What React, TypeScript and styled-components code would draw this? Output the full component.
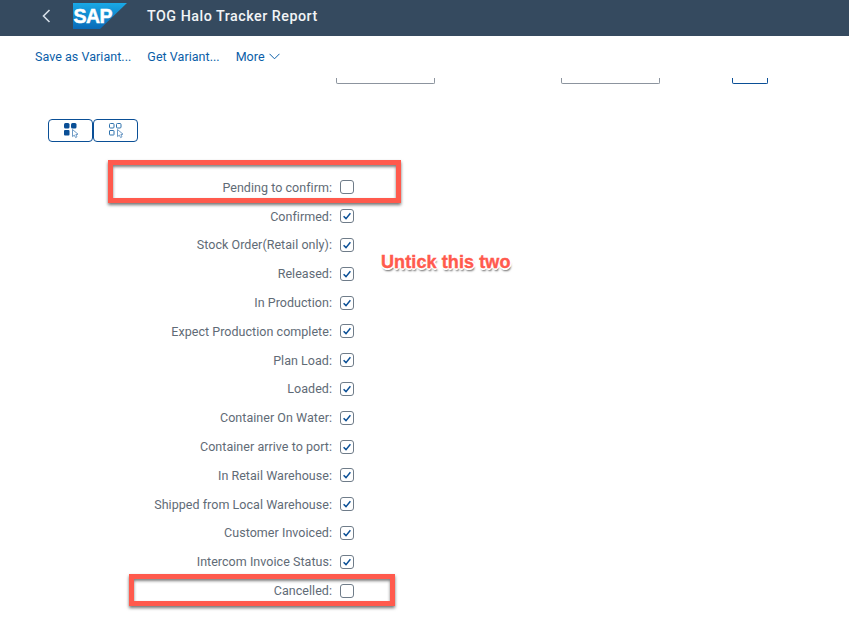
import React from 'react';
import styled, { createGlobalStyle } from 'styled-components';

const colors = {
  shell: '#354a5f',
  link: '#0a5ea8',
  label: '#5f6b76',
  inputLine: '#8c949e',
  boxLine: '#0a4f96',
  red: '#ff5a4d',
};

const statuses = [
  { label: 'Pending to confirm:', checked: false },
  { label: 'Confirmed:', checked: true },
  { label: 'Stock Order(Retail only):', checked: true },
  { label: 'Released:', checked: true },
  { label: 'In Production:', checked: true },
  { label: 'Expect Production complete:', checked: true },
  { label: 'Plan Load:', checked: true },
  { label: 'Loaded:', checked: true },
  { label: 'Container On Water:', checked: true },
  { label: 'Container arrive to port:', checked: true },
  { label: 'In Retail Warehouse:', checked: true },
  { label: 'Shipped from Local Warehouse:', checked: true },
  { label: 'Customer Invoiced:', checked: true },
  { label: 'Intercom Invoice Status:', checked: true },
  { label: 'Cancelled:', checked: false },
];

const GlobalStyle = createGlobalStyle`
  html, body {
    margin: 0;
    background: #fff;
    overflow: hidden;
  }
  body {
    font-family: Roboto, "Liberation Sans", sans-serif;
  }
`;

const Page = styled.div`
  position: relative;
  width: 849px;
  height: 621px;
  overflow: hidden;
`;

const ShellBar = styled.header`
  display: flex;
  align-items: center;
  height: 36px;
  padding-left: 41px;
  background: ${colors.shell};
`;

const BackIcon = styled.svg`
  width: 11px;
  height: 14px;
  margin-right: 21px;
  margin-top: -4px;
`;

const Logo = styled.svg`
  width: 54px;
  height: 26px;
  margin-top: -4px;
  margin-right: 20px;
`;

const Title = styled.h1`
  margin: -4px 0 0;
  font-size: 14.3px;
  font-weight: 500;
  letter-spacing: 0.5px;
  color: #f2f4f6;
  white-space: nowrap;
`;

const ToolBar = styled.nav`
  display: flex;
  align-items: center;
  gap: 16px;
  height: 42px;
  padding-left: 35px;
`;

const ToolLink = styled.a`
  display: inline-flex;
  align-items: center;
  gap: 4px;
  margin-top: -2px;
  font-size: 12.5px;
  letter-spacing: 0.04px;
  color: ${colors.link};
`;

const ClippedFields = styled.div`
  display: flex;
  height: 6px;
  padding-left: 336px;
`;

const ClippedField = styled.div<{ $width: number; $gap: number; $color: string }>`
  box-sizing: border-box;
  width: ${(p) => p.$width}px;
  margin-right: ${(p) => p.$gap}px;
  border: 1px solid ${(p) => p.$color};
  border-top: none;
  border-radius: 0 0 2px 2px;
`;

const ViewButtons = styled.div`
  display: flex;
  margin: 35px 0 0 48px;
`;

const ViewButton = styled.button`
  display: flex;
  align-items: center;
  justify-content: center;
  width: 45px;
  height: 23px;
  padding: 0;
  background: #fff;
  border: 1px solid ${colors.boxLine};
  border-radius: 4px;
`;

const Form = styled.div`
  margin-top: 31px;
`;

const Row = styled.label`
  display: grid;
  grid-template-columns: 332px 14px;
  column-gap: 8px;
  align-items: center;
  height: 28.8px;
`;

const Label = styled.span`
  font-size: 12.5px;
  letter-spacing: 0.04px;
  color: ${colors.label};
  text-align: right;
  white-space: nowrap;
`;

const CheckBox = styled.span`
  display: flex;
  align-items: center;
  justify-content: center;
  box-sizing: border-box;
  width: 14px;
  height: 14px;
  border: 1px solid #6f7c89;
  border-radius: 3px;
  background: #fff;
`;

const Highlight = styled.div<{ $left: number; $top: number; $width: number; $height: number }>`
  position: absolute;
  box-sizing: border-box;
  left: ${(p) => p.$left}px;
  top: ${(p) => p.$top}px;
  width: ${(p) => p.$width}px;
  height: ${(p) => p.$height}px;
  border: 5px solid ${colors.red};
  box-shadow: 0 2px 3px rgba(0, 0, 0, 0.55), inset 0 2px 3px rgba(0, 0, 0, 0.5);
`;

const Note = styled.div`
  position: absolute;
  left: 381px;
  top: 252px;
  font-family: "Liberation Sans", Arial, sans-serif;
  font-size: 18px;
  font-weight: 700;
  letter-spacing: 0.1px;
  color: ${colors.red};
  -webkit-text-stroke: 0.4px ${colors.red};
  white-space: nowrap;
  text-shadow: 2px 0 0 #fff, -2px 0 0 #fff, 0 2px 0 #fff, 0 -2px 0 #fff, 1px 1px 0 #fff, -1px 1px 0 #fff,
    1px -1px 0 #fff, -1px -1px 0 #fff, 1px 3px 2px rgba(0, 0, 0, 0.6);
`;

const Tick = () => (
  <svg width="10" height="10" viewBox="0 0 10 10" fill="none">
    <path d="M1.6 5.2 L4 7.6 L8.4 2.2" stroke={colors.boxLine} strokeWidth="1.5" />
  </svg>
);

const Chevron = () => (
  <svg width="11" height="7" viewBox="0 0 11 7" fill="none">
    <path d="M0.5 0.8 L5.5 5.8 L10.5 0.8" stroke={colors.link} strokeWidth="1" />
  </svg>
);

const Pointer = () => (
  <path
    d="M9.5 7.5 L9.5 14.6 L11.3 13.2 L12.6 15.6 L14 14.8 L12.8 12.6 L15 12.2 Z"
    fill="#fff"
    stroke="#5d8fbe"
    strokeWidth="0.9"
  />
);

const SolidTilesIcon = () => (
  <svg width="16" height="17" viewBox="0 0 16 17">
    <g fill={colors.boxLine}>
      <rect x="1" y="1" width="5.5" height="5.5" rx="1.5" />
      <rect x="8" y="1" width="5.5" height="5.5" rx="1.5" />
      <rect x="1" y="8" width="5.5" height="5.5" rx="1" />
    </g>
    <Pointer />
  </svg>
);

const OutlineTilesIcon = () => (
  <svg width="16" height="17" viewBox="0 0 16 17">
    <g fill="none" stroke="#2f72ad" strokeWidth="1">
      <rect x="1.5" y="1.5" width="4.5" height="4.5" rx="1" />
      <rect x="8.5" y="1.5" width="4.5" height="4.5" rx="1" />
      <rect x="1.5" y="8.5" width="4.5" height="4.5" rx="0.5" />
    </g>
    <Pointer />
  </svg>
);

export default function App() {
  return (
    <Page>
      <GlobalStyle />
      <ShellBar>
        <BackIcon viewBox="0 0 11 14" fill="none">
          <path d="M8.5 1 L2.5 7 L8.5 13" stroke="#d5dee8" strokeWidth="1.6" />
        </BackIcon>
        <Logo viewBox="0 0 54 26">
          <defs>
            <linearGradient id="sapBlue" x1="0" y1="0" x2="0" y2="1">
              <stop offset="0" stopColor="#19a9e6" />
              <stop offset="1" stopColor="#0a6ab8" />
            </linearGradient>
          </defs>
          <polygon points="0,0 54,0 27,26 0,26" fill="url(#sapBlue)" />
          <text
            x="0.5"
            y="19.5"
            fontFamily="Liberation Sans, Arial, sans-serif"
            fontSize="19.5"
            fontWeight="700"
            letterSpacing="-0.6"
            fill="#fff"
            stroke="#fff"
            strokeWidth="0.5"
          >
            SAP
          </text>
        </Logo>
        <Title>TOG Halo Tracker Report</Title>
      </ShellBar>
      <ToolBar>
        <ToolLink>Save as Variant...</ToolLink>
        <ToolLink>Get Variant...</ToolLink>
        <ToolLink>
          More <Chevron />
        </ToolLink>
      </ToolBar>
      <ClippedFields>
        <ClippedField $width={99} $gap={126} $color={colors.inputLine} />
        <ClippedField $width={99} $gap={72} $color={colors.inputLine} />
        <ClippedField $width={36} $gap={0} $color={colors.boxLine} />
      </ClippedFields>
      <ViewButtons>
        <ViewButton>
          <SolidTilesIcon />
        </ViewButton>
        <ViewButton>
          <OutlineTilesIcon />
        </ViewButton>
      </ViewButtons>
      <Form>
        {statuses.map((s) => (
          <Row key={s.label}>
            <Label>{s.label}</Label>
            <CheckBox>{s.checked && <Tick />}</CheckBox>
          </Row>
        ))}
      </Form>
      <Highlight $left={108} $top={160} $width={293} $height={43} />
      <Highlight $left={129} $top={574} $width={266} $height={32} />
      <Note>Untick this two</Note>
    </Page>
  );
}
